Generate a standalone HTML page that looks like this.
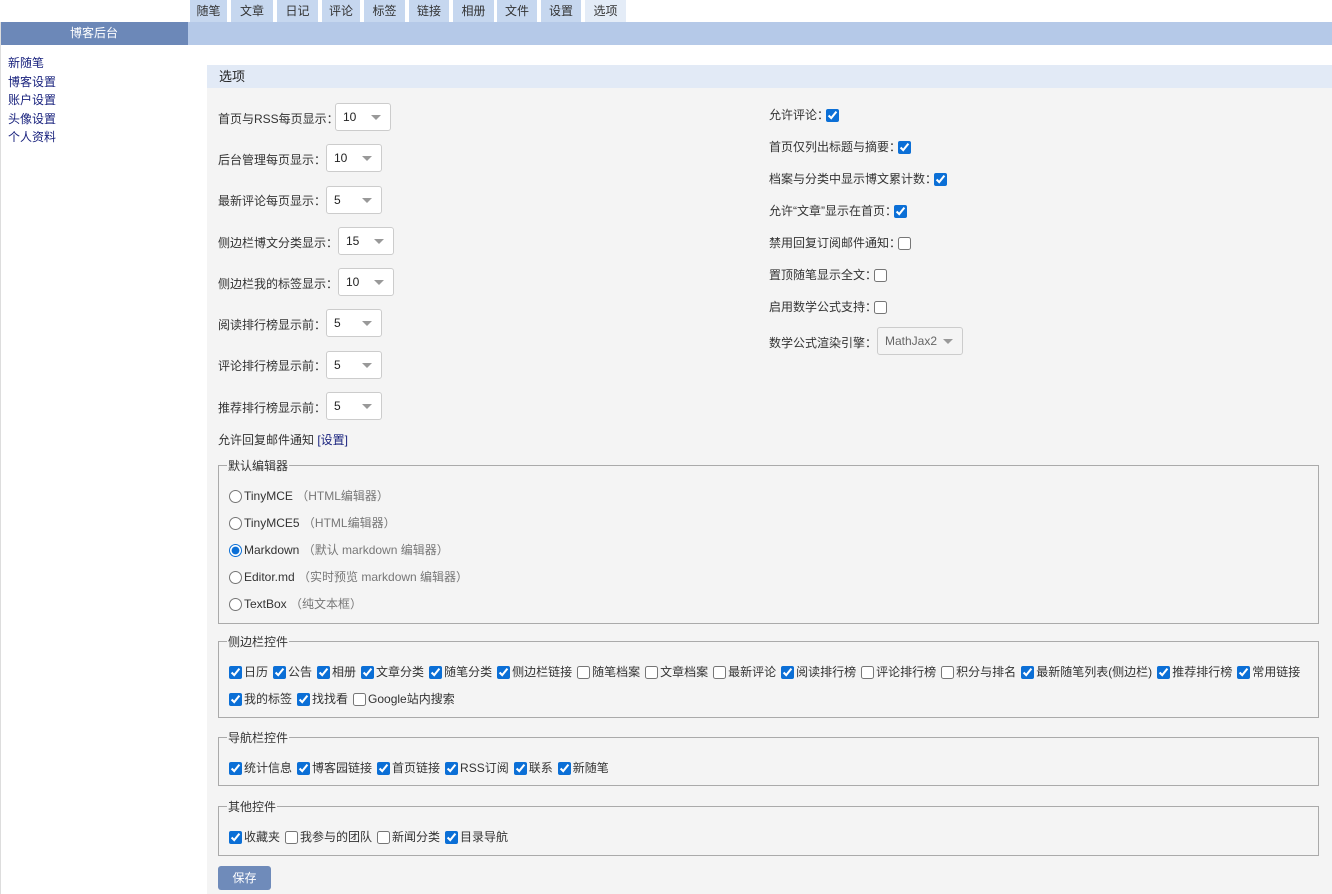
<!DOCTYPE html>
<html><head><meta charset="utf-8"><style>
*{box-sizing:border-box;margin:0;padding:0}
body{width:1332px;height:894px;overflow:hidden;background:#fff;font-family:"Liberation Sans","Noto Sans CJK SC",sans-serif;font-size:12px;color:#333;position:relative}
.a{position:absolute}
.tab{position:absolute;top:0;height:22px;background:#c6d7ef;color:#333;text-align:center;line-height:22px;font-size:12px}
.tab.on{background:#e4ecf7}
.side a{display:block;color:#1a237e;text-decoration:none;font-size:12px;line-height:18.5px}
.lbl{position:absolute;white-space:nowrap}
.lbl input{margin-left:-3px}
.sel{position:absolute;height:28px;border:1px solid #ccc;border-radius:3px;background:#fff;padding-left:7px;line-height:26px;font-size:12px;color:#222}
.sel:after{content:"";position:absolute;right:9px;top:11px;border-left:5px solid transparent;border-right:5px solid transparent;border-top:5px solid #999}
input{accent-color:#0b6fd6;width:13px;height:13px;vertical-align:middle;margin:0 2px 0 0}
fieldset{position:absolute;left:218px;width:1101px;min-width:0;overflow:hidden;border:1px solid #aaa;padding:0 10px}
legend{font-size:12px;color:#333;padding:0 1px;margin-left:-2px}
.row{white-space:nowrap;font-size:12px}
.row label{margin-right:5px}
.g{color:#777}
</style></head><body>
<div class="a" style="left:0;top:22px;width:188px;height:23px;background:#6c88b8;color:#fff;text-align:center;line-height:23px;font-size:12px">博客后台</div>
<div class="a" style="left:0;top:22px;width:1px;height:872px;background:#ddd"></div>
<div class="a" style="left:188px;top:22px;width:1144px;height:23px;background:#b5c9e8"></div>
<div class="tab" style="left:190px;width:37px">随笔</div>
<div class="tab" style="left:231px;width:42px">文章</div>
<div class="tab" style="left:277px;width:41px">日记</div>
<div class="tab" style="left:322px;width:38px">评论</div>
<div class="tab" style="left:364px;width:41px">标签</div>
<div class="tab" style="left:409px;width:40px">链接</div>
<div class="tab" style="left:453px;width:41px">相册</div>
<div class="tab" style="left:497px;width:40px">文件</div>
<div class="tab" style="left:541px;width:40px">设置</div>
<div class="tab on" style="left:585px;width:41px">选项</div>
<div class="a side" style="left:8px;top:54px">
<a>新随笔</a><a>博客设置</a><a>账户设置</a><a>头像设置</a><a>个人资料</a></div>
<div class="a" style="left:207px;top:65px;width:1125px;height:23px;background:#e2eaf6;padding-left:12px;line-height:23px;font-size:13px;color:#222">选项</div>
<div class="a" style="left:207px;top:88px;width:1125px;height:806px;background:#f4f4f4"></div>

<div class="lbl" style="left:218px;top:110px">首页与RSS每页显示：</div><div class="sel" style="left:335px;top:103px;width:56px">10</div>
<div class="lbl" style="left:218px;top:151px">后台管理每页显示：</div><div class="sel" style="left:326px;top:144px;width:56px">10</div>
<div class="lbl" style="left:218px;top:192px">最新评论每页显示：</div><div class="sel" style="left:326px;top:186px;width:56px">5</div>
<div class="lbl" style="left:218px;top:234px">侧边栏博文分类显示：</div><div class="sel" style="left:338px;top:227px;width:56px">15</div>
<div class="lbl" style="left:218px;top:275px">侧边栏我的标签显示：</div><div class="sel" style="left:338px;top:268px;width:56px">10</div>
<div class="lbl" style="left:218px;top:316px">阅读排行榜显示前：</div><div class="sel" style="left:326px;top:309px;width:56px">5</div>
<div class="lbl" style="left:218px;top:357px">评论排行榜显示前：</div><div class="sel" style="left:326px;top:351px;width:56px">5</div>
<div class="lbl" style="left:218px;top:399px">推荐排行榜显示前：</div><div class="sel" style="left:326px;top:392px;width:56px">5</div>
<div class="lbl" style="left:218px;top:431px">允许回复邮件通知 <span style="color:#1a237e">[设置]</span></div>

<div class="lbl" style="left:769px;top:106px">允许评论：<input type="checkbox" checked></div>
<div class="lbl" style="left:769px;top:138px">首页仅列出标题与摘要：<input type="checkbox" checked></div>
<div class="lbl" style="left:769px;top:170px">档案与分类中显示博文累计数：<input type="checkbox" checked></div>
<div class="lbl" style="left:769px;top:202px">允许“文章”显示在首页：<input type="checkbox" checked></div>
<div class="lbl" style="left:769px;top:234px">禁用回复订阅邮件通知：<input type="checkbox"></div>
<div class="lbl" style="left:769px;top:266px">置顶随笔显示全文：<input type="checkbox"></div>
<div class="lbl" style="left:769px;top:298px">启用数学公式支持：<input type="checkbox"></div>
<div class="lbl" style="left:769px;top:334px">数学公式渲染引擎：</div><div class="sel" style="left:877px;top:327px;width:86px;color:#666;background:#f4f4f4">MathJax2</div>

<fieldset style="top:457px;height:167px"><legend>默认编辑器</legend>
<div class="row" style="line-height:27px;margin-top:9px">
<div><input type="radio">TinyMCE <span class="g">（HTML编辑器）</span></div>
<div><input type="radio">TinyMCE5 <span class="g">（HTML编辑器）</span></div>
<div><input type="radio" checked>Markdown <span class="g">（默认 markdown 编辑器）</span></div>
<div><input type="radio">Editor.md <span class="g">（实时预览 markdown 编辑器）</span></div>
<div><input type="radio">TextBox <span class="g">（纯文本框）</span></div>
</div></fieldset>

<fieldset style="top:633px;height:85px"><legend>侧边栏控件</legend>
<div class="row" style="line-height:27px;margin-top:9px">
<div><label><input type="checkbox" checked>日历</label><label><input type="checkbox" checked>公告</label><label><input type="checkbox" checked>相册</label><label><input type="checkbox" checked>文章分类</label><label><input type="checkbox" checked>随笔分类</label><label><input type="checkbox" checked>侧边栏链接</label><label><input type="checkbox">随笔档案</label><label><input type="checkbox">文章档案</label><label><input type="checkbox">最新评论</label><label><input type="checkbox" checked>阅读排行榜</label><label><input type="checkbox">评论排行榜</label><label><input type="checkbox">积分与排名</label><label><input type="checkbox" checked>最新随笔列表(侧边栏)</label><label><input type="checkbox" checked>推荐排行榜</label><label><input type="checkbox" checked>常用链接</label></div>
<div><label><input type="checkbox" checked>我的标签</label><label><input type="checkbox" checked>找找看</label><label><input type="checkbox">Google站内搜索</label></div>
</div></fieldset>

<fieldset style="top:729px;height:57px"><legend>导航栏控件</legend>
<div class="row" style="line-height:27px;margin-top:9px">
<label><input type="checkbox" checked>统计信息</label><label><input type="checkbox" checked>博客园链接</label><label><input type="checkbox" checked>首页链接</label><label><input type="checkbox" checked>RSS订阅</label><label><input type="checkbox" checked>联系</label><label><input type="checkbox" checked>新随笔</label>
</div></fieldset>

<fieldset style="top:798px;height:58px"><legend>其他控件</legend>
<div class="row" style="line-height:27px;margin-top:9px">
<label><input type="checkbox" checked>收藏夹</label><label><input type="checkbox">我参与的团队</label><label><input type="checkbox">新闻分类</label><label><input type="checkbox" checked>目录导航</label>
</div></fieldset>

<div class="a" style="left:218px;top:866px;width:53px;height:24px;background:#6f8bba;border-radius:3px;color:#fff;text-align:center;line-height:24px">保存</div>
</body></html>
